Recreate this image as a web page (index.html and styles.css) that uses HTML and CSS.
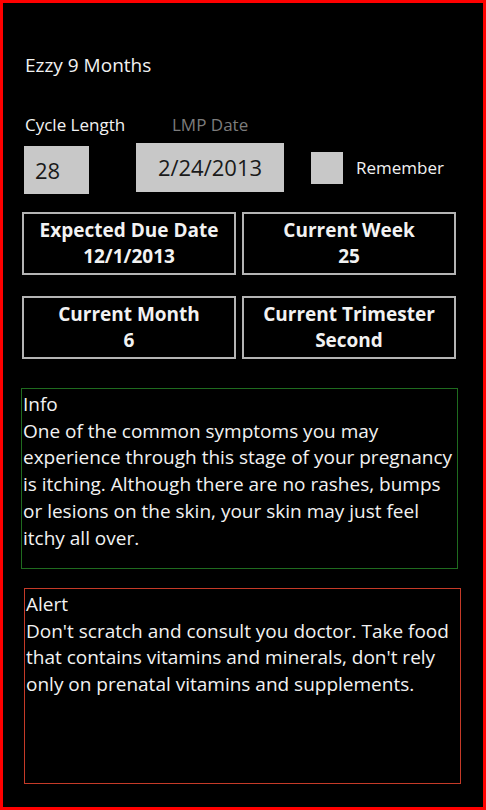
FILE: index.html
```html
<!DOCTYPE html>
<html>
<head>
	<meta charset="utf-8" />
	<title>Ezzy 9 Months</title>
	<link rel="stylesheet" href="styles.css">
</head>
<body>
<div class="screen">
	<div class="title">Ezzy 9 Months</div>
	<div class="labels">
		<span class="lbl-cycle">Cycle Length</span>
		<span class="lbl-lmp">LMP Date</span>
	</div>
	<div class="inputs">
		<div class="num">28</div>
		<div class="date">2/24/2013</div>
		<div class="check"></div>
		<div class="remember">Remember</div>
	</div>
	<div class="stats">
		<div class="stat">Expected Due Date<br />12/1/2013</div>
		<div class="stat">Current Week<br />25</div>
		<div class="stat">Current Month<br />6</div>
		<div class="stat">Current Trimester<br />Second</div>
	</div>
	<div class="info">
		<div>Info</div>
		<div>One of the common symptoms you may experience through this stage of your pregnancy is itching. Although there are no rashes, bumps or lesions on the skin, your skin may just feel itchy all over.</div>
	</div>
	<div class="alert">
		<div>Alert</div>
		<div>Don't scratch and consult you doctor. Take food that contains vitamins and minerals, don't rely only on prenatal vitamins and supplements.</div>
	</div>
</div>
</body>
</html>
```

FILE: styles.css
```css
*{
margin:0;
padding:0;
box-sizing:border-box;}
body{
background:#000;
color:#f2f2f2;
font-family:"Open Sans","Noto Sans",sans-serif;
}
.screen{
width:486px;
height:810px;
border:3px solid #f00;
background:#000;
}
.title{
padding:49px 0 0 22px;
font-size:19px;
line-height:26px;
}
.labels{
margin-top:36px;
font-size:17px;
line-height:22px;
display:flex;
}
.lbl-cycle{
margin-left:22px;
width:147px;
}
.lbl-lmp{
color:#7c7c7c;
}
.inputs{
margin-top:7px;
display:flex;
align-items:flex-start;
}
.num{
margin:3px 0 0 21px;
width:65px;
height:48px;
background:#c8c8c8;
color:#1a1a1a;
font-size:22px;
line-height:48px;
padding-left:11px;
}
.date{
margin-left:47px;
width:148px;
height:49px;
background:#c8c8c8;
color:#1a1a1a;
font-size:22px;
line-height:49px;
text-align:center;
}
.check{
margin:9px 0 0 27px;
width:32px;
height:32px;
background:#c8c8c8;
}
.remember{
margin:13px 0 0 13px;
font-size:17px;
line-height:24px;
}
.stats{
margin:18px 0 0 19px;
width:434px;
display:grid;
grid-template-columns:214px 214px;
column-gap:6px;
row-gap:21px;
}
.stat{
height:63px;
border:2px solid #b4b4b4;
padding-top:3px;
text-align:center;
font-weight:bold;
font-size:19px;
line-height:26px;
}
.info{
margin:29px 0 0 18px;
width:437px;
height:181px;
border:1px solid #1f6b1f;
padding:2px 0 0 1px;
font-size:19px;
line-height:26.7px;
}
.alert{
margin:19px 0 0 21px;
width:437px;
height:196px;
border:1px solid #c53a28;
padding:2px 0 0 1px;
font-size:19px;
line-height:26.7px;
}
```
